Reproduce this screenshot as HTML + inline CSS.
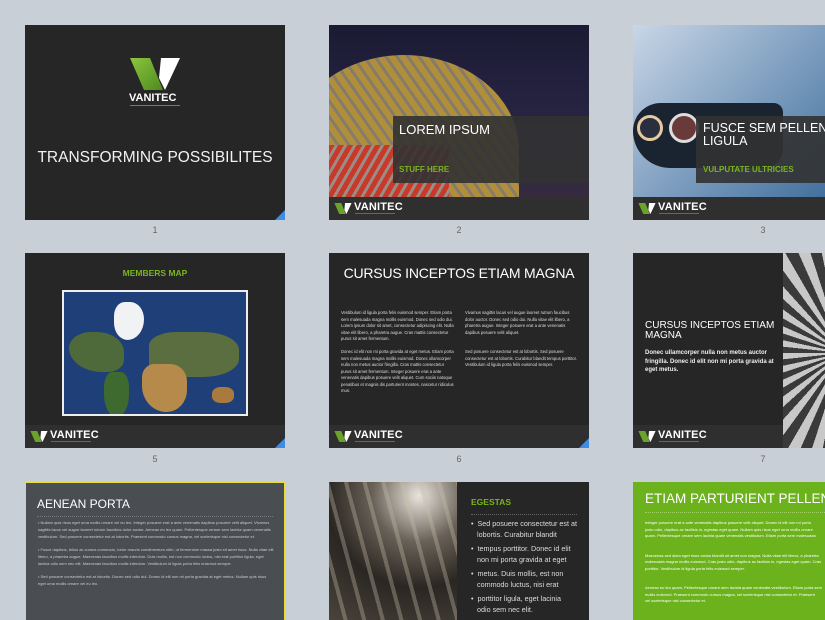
<!DOCTYPE html>
<html style="width:825px;height:620px;overflow:hidden"><head><meta charset="utf-8"><style>
*{margin:0;padding:0;box-sizing:border-box}
body{width:825px;height:620px;background:#c9cfd6;position:relative;overflow:hidden;font-family:"Liberation Sans",sans-serif}
.s{position:absolute;width:260px;height:195px;background:#262626;overflow:hidden}
.ft{position:absolute;left:0;bottom:0;width:100%;height:23px;background:#2f2f30}
.ft svg{position:absolute;left:5px;top:6px}
.ft b{position:absolute;left:25px;top:4px;color:#fff;font-size:11px;font-weight:bold;letter-spacing:.2px}
.ft i{position:absolute;left:26px;top:16px;width:40px;height:1px;background:#666}
.c{position:absolute;right:0;bottom:0;width:0;height:0;border-left:10px solid transparent;border-bottom:10px solid #3d8ee6}
.n{position:absolute;width:260px;text-align:center;font-size:9px;color:#666}
.a{position:absolute;color:#fff;font-weight:bold}
.t{position:absolute;color:#ddd;font-size:4.2px;line-height:6.5px}
</style></head><body>

<!-- slide 1 -->
<div class="s" style="left:25px;top:25px">
<svg style="position:absolute;left:105px;top:33px" width="50" height="32" viewBox="0 0 50 32"><defs><linearGradient id="g" x1="0" y1="0" x2="1" y2="1"><stop offset="0" stop-color="#8cc63f"/><stop offset="1" stop-color="#4e8a1e"/></linearGradient></defs><polygon points="0,0 20,0 33,32 14,32" fill="url(#g)"/><polygon points="31,0 50,0 35,32 29,20" fill="#fff"/></svg>
<div class="a" style="left:104px;top:67px;font-size:11px">VANITEC</div>
<div style="position:absolute;left:105px;top:80px;width:50px;height:1px;background:#777"></div>
<div class="a" style="left:0;width:260px;text-align:center;top:124px;font-size:15.5px;font-weight:normal;color:#f2f2f2">TRANSFORMING POSSIBILITES</div>
<div class="c"></div></div>
<div class="n" style="left:25px;top:225px">1</div>

<!-- slide 2 -->
<div class="s" style="left:329px;top:25px;background:linear-gradient(180deg,#1b1a33,#2a2747 60%,#3a2c3a)">
<div style="position:absolute;left:-40px;top:30px;width:230px;height:190px;border-radius:50% 50% 0 0;background:repeating-linear-gradient(55deg,#b8953a 0 6px,#8b8070 6px 9px),#a57b2c;opacity:.95"></div>
<div style="position:absolute;left:0;top:120px;width:120px;height:55px;background:repeating-linear-gradient(120deg,#c8392a 0 5px,#9a8d85 5px 8px)"></div>
<div style="position:absolute;left:64px;top:91px;width:196px;height:67px;background:rgba(50,50,50,.9)"></div>
<div class="a" style="left:70px;top:97px;font-size:13px;font-weight:normal">LOREM IPSUM</div>
<div class="a" style="left:70px;top:140px;font-size:8px;color:#7ab51d">STUFF HERE</div>
<div class="ft"><svg width="18" height="11" viewBox="0 0 50 32"><polygon points="0,0 20,0 33,32 14,32" fill="#6aa22a"/><polygon points="31,0 50,0 35,32 29,20" fill="#fff"/></svg><b>VANITEC</b><i></i></div></div>
<div class="n" style="left:329px;top:225px">2</div>

<!-- slide 3 -->
<div class="s" style="left:633px;top:25px;width:192px;background:linear-gradient(135deg,#c9d6e6,#7f9fc0 50%,#3a6a98)">
<div style="position:absolute;left:0;top:78px;width:150px;height:65px;background:#1a2330;border-radius:30px 10px 20px 40px"></div>
<div style="position:absolute;left:4px;top:90px;width:26px;height:26px;border-radius:50%;border:3px solid #e7c9a0;background:#2a2f40"></div>
<div style="position:absolute;left:36px;top:88px;width:30px;height:30px;border-radius:50%;border:3px solid #ddd;background:#6a3a3a"></div>
<div style="position:absolute;left:63px;top:91px;width:197px;height:67px;background:rgba(50,50,50,.9)"></div>
<div class="a" style="left:70px;top:97px;font-size:12.5px;font-weight:normal;line-height:13px;white-space:nowrap">FUSCE SEM PELLENTESQUE<br>LIGULA</div>
<div class="a" style="left:70px;top:140px;font-size:8px;color:#7ab51d">VULPUTATE ULTRICIES</div>
<div class="ft"><svg width="18" height="11" viewBox="0 0 50 32"><polygon points="0,0 20,0 33,32 14,32" fill="#6aa22a"/><polygon points="31,0 50,0 35,32 29,20" fill="#fff"/></svg><b>VANITEC</b><i></i></div></div>
<div class="n" style="left:633px;top:225px">3</div>

<!-- slide 4 -->
<div class="s" style="left:25px;top:253px">
<div class="a" style="left:0;width:260px;text-align:center;top:15px;font-size:8.5px;color:#7ab51d">MEMBERS MAP</div>
<div style="position:absolute;left:37px;top:37px;width:186px;height:126px;border:2px solid #eee;background:#1e3f78;overflow:hidden">
<div style="position:absolute;left:5px;top:40px;width:55px;height:40px;background:#4f6a3a;border-radius:40% 50% 30% 60%"></div>
<div style="position:absolute;left:40px;top:80px;width:25px;height:45px;background:#3e6a30;border-radius:40% 40% 60% 60%"></div>
<div style="position:absolute;left:50px;top:10px;width:30px;height:38px;background:#f0f2f4;border-radius:40% 50% 60% 50%"></div>
<div style="position:absolute;left:85px;top:40px;width:90px;height:45px;background:#5a6e40;border-radius:30% 40% 40% 30%"></div>
<div style="position:absolute;left:78px;top:72px;width:45px;height:48px;background:#b58a4a;border-radius:30% 40% 50% 60%"></div>
<div style="position:absolute;left:148px;top:95px;width:22px;height:16px;background:#a87a3e;border-radius:40%"></div>
</div>
<div class="ft"><svg width="18" height="11" viewBox="0 0 50 32"><polygon points="0,0 20,0 33,32 14,32" fill="#6aa22a"/><polygon points="31,0 50,0 35,32 29,20" fill="#fff"/></svg><b>VANITEC</b><i></i></div><div class="c"></div></div>
<div class="n" style="left:25px;top:454px">5</div>

<!-- slide 6 -->
<div class="s" style="left:329px;top:253px">
<div class="a" style="left:0;width:260px;text-align:center;top:12px;font-size:14px;font-weight:normal;white-space:nowrap;letter-spacing:-.2px">CURSUS INCEPTOS ETIAM MAGNA</div>
<div class="t" style="left:12px;top:57px;width:114px">Vestibulum id ligula porta felis euismod semper. Etiam porta sem malesuada magna mollis euismod. Donec sed odio dui. Lorem ipsum dolor sit amet, consectetur adipiscing elit. Nulla vitae elit libero, a pharetra augue. Cras mattis consectetur purus sit amet fermentum.<br><br>Donec id elit non mi porta gravida at eget metus. Etiam porta sem malesuada magna mollis euismod. Donec ullamcorper nulla non metus auctor fringilla. Cras mattis consectetur purus sit amet fermentum. Integer posuere erat a ante venenatis dapibus posuere velit aliquet. Cum sociis natoque penatibus et magnis dis parturient montes, nascetur ridiculus mus.</div>
<div class="t" style="left:136px;top:57px;width:114px">Vivamus sagittis lacus vel augue laoreet rutrum faucibus dolor auctor. Donec sed odio dui. Nulla vitae elit libero, a pharetra augue. Integer posuere erat a ante venenatis dapibus posuere velit aliquet.<br><br><br>Sed posuere consectetur est at lobortis. Sed posuere consectetur est at lobortis. Curabitur blandit tempus porttitor. Vestibulum id ligula porta felis euismod semper.</div>
<div class="ft"><svg width="18" height="11" viewBox="0 0 50 32"><polygon points="0,0 20,0 33,32 14,32" fill="#6aa22a"/><polygon points="31,0 50,0 35,32 29,20" fill="#fff"/></svg><b>VANITEC</b><i></i></div><div class="c"></div></div>
<div class="n" style="left:329px;top:454px">6</div>

<!-- slide 7 -->
<div class="s" style="left:633px;top:253px;width:192px">
<div style="position:absolute;left:150px;top:0;width:110px;height:195px;background:repeating-conic-gradient(from 0deg at 60px 100px,#c8c8c8 0 6deg,#3a3a3a 6deg 12deg)"></div>
<div class="a" style="left:12px;top:68px;font-size:10px;font-weight:normal;line-height:10px">CURSUS INCEPTOS ETIAM<br>MAGNA</div>
<div class="a" style="left:12px;top:96px;width:134px;font-size:6px;line-height:8.5px;color:#eee">Donec ullamcorper nulla non metus auctor fringilla. Donec id elit non mi porta gravida at eget metus.</div>
<div class="ft" style="width:150px"><svg width="18" height="11" viewBox="0 0 50 32"><polygon points="0,0 20,0 33,32 14,32" fill="#6aa22a"/><polygon points="31,0 50,0 35,32 29,20" fill="#fff"/></svg><b>VANITEC</b><i></i></div></div>
<div class="n" style="left:633px;top:454px">7</div>

<!-- slide 8 -->
<div class="s" style="left:25px;top:482px;height:138px;background:#4a4d52;border:1.5px solid #e8dc3a;border-bottom:none">
<div class="a" style="left:11px;top:14px;font-size:12px;font-weight:normal">AENEAN PORTA</div>
<div style="position:absolute;left:11px;top:33px;width:236px;border-top:1px dotted #777"></div>
<div class="t" style="left:12px;top:37px;width:236px;font-size:4px;line-height:6.8px;color:#ccc">• Nullam quis risus eget urna mollis ornare vel eu leo. Integer posuere erat a ante venenatis dapibus posuere velit aliquet. Vivamus sagittis lacus vel augue laoreet rutrum faucibus dolor auctor. Aenean eu leo quam. Pellentesque ornare sem lacinia quam venenatis vestibulum. Sed posuere consectetur est at lobortis. Praesent commodo cursus magna, vel scelerisque nisl consectetur et.<br><br>• Fusce dapibus, tellus ac cursus commodo, tortor mauris condimentum nibh, ut fermentum massa justo sit amet risus. Nulla vitae elit libero, a pharetra augue. Maecenas faucibus mollis interdum. Duis mollis, est non commodo luctus, nisi erat porttitor ligula, eget lacinia odio sem nec elit. Maecenas faucibus mollis interdum. Vestibulum id ligula porta felis euismod semper.<br><br>• Sed posuere consectetur est at lobortis. Donec sed odio dui. Donec id elit non mi porta gravida at eget metus. Nullam quis risus eget urna mollis ornare vel eu leo.</div></div>

<!-- slide 9 -->
<div class="s" style="left:329px;top:482px;height:138px">
<div style="position:absolute;left:0;top:0;width:128px;height:138px;background:radial-gradient(circle at 70% 10%,#e8e4dc,#6a6258 30%,#2a2622 60%,#4a443c)"></div>
<div style="position:absolute;left:0;top:0;width:128px;height:138px;background:repeating-linear-gradient(75deg,transparent 0 14px,rgba(200,190,170,.35) 14px 18px)"></div>
<div class="a" style="left:142px;top:15px;font-size:8.5px;color:#7ab51d">EGESTAS</div>
<div style="position:absolute;left:142px;top:32px;width:106px;border-top:1px dotted #666"></div>
<div class="a" style="left:142px;top:36px;width:116px;font-size:7.2px;font-weight:normal;line-height:11px;color:#ddd">• &nbsp;Sed posuere consectetur est at<br>&nbsp;&nbsp;&nbsp;lobortis. Curabitur blandit<br><div style="height:3px"></div>• &nbsp;tempus porttitor. Donec id elit<br>&nbsp;&nbsp;&nbsp;non mi porta gravida at eget<br><div style="height:3px"></div>• &nbsp;metus. Duis mollis, est non<br>&nbsp;&nbsp;&nbsp;commodo luctus, nisi erat<br><div style="height:3px"></div>• &nbsp;porttitor ligula, eget lacinia<br>&nbsp;&nbsp;&nbsp;odio sem nec elit.</div></div>

<!-- slide 10 -->
<div class="s" style="left:633px;top:482px;width:192px;height:138px;background:#6cb21c">
<div class="a" style="left:12px;top:9px;font-size:13.5px;font-weight:normal;white-space:nowrap">ETIAM PARTURIENT PELLENTESQUE</div>
<div style="position:absolute;left:12px;top:30px;width:250px;border-top:1px dotted #9fd060"></div>
<div class="t" style="left:12px;top:38px;width:180px;color:#fff;font-size:4px;white-space:nowrap;overflow:hidden;height:98px">Integer posuere erat a ante venenatis dapibus posuere velit aliquet. Donec id elit non mi porta<br>justo odio, dapibus ac facilisis in, egestas eget quam. Nullam quis risus eget urna mollis ornare<br>quam. Pellentesque ornare sem lacinia quam venenatis vestibulum. Etiam porta sem malesuada<br><br><br>Maecenas sed diam eget risus varius blandit sit amet non magna. Nulla vitae elit libero, a pharetra<br>malesuada magna mollis euismod. Cras justo odio, dapibus ac facilisis in, egestas eget quam. Cras<br>porttitor. Vestibulum id ligula porta felis euismod semper.<br><br><br>Aenean eu leo quam. Pellentesque ornare sem lacinia quam venenatis vestibulum. Etiam porta sem<br>mollis euismod. Praesent commodo cursus magna, vel scelerisque nisl consectetur et. Praesent<br>vel scelerisque nisl consectetur et.<br><br><br>Nulla vitae elit libero, a pharetra augue. Praesent commodo cursus magna, vel scelerisque nisl</div></div>

</body></html>
